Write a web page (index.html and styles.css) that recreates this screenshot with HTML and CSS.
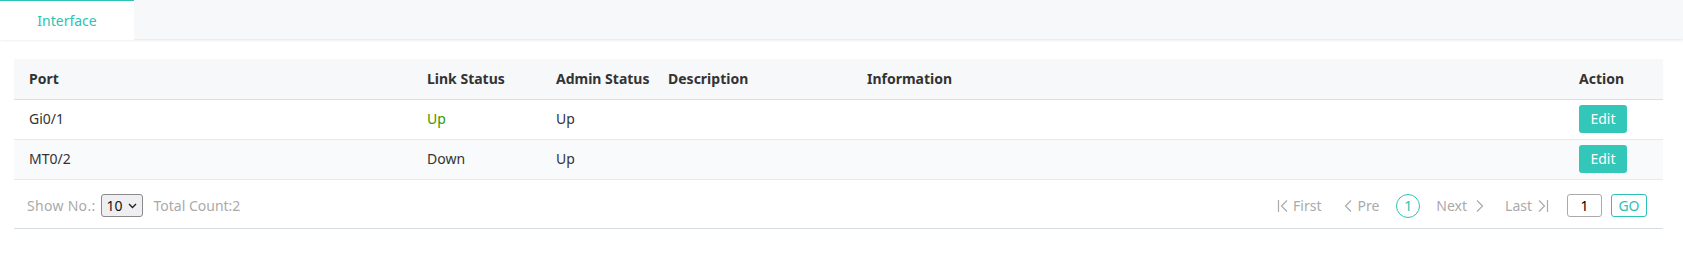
FILE: index.html
```
<!DOCTYPE html>
<html lang="en">
    <head>
        <meta charset="utf-8" />
        <title>Interface</title>
        <link rel="stylesheet" href="styles.css">
    </head>
    <body>
        <div class="tabbar">
            <div class="tab on">Interface</div>
        </div>
        <div class="wrap">
            <table class="grid">
                <colgroup>
                    <col class="c-port"><col class="c-link"><col class="c-admin"><col class="c-desc"><col class="c-info"><col class="c-act">
                </colgroup>
                <thead>
                    <tr>
                        <th>Port</th>
                        <th>Link Status</th>
                        <th>Admin Status</th>
                        <th>Description</th>
                        <th>Information</th>
                        <th>Action</th>
                    </tr>
                </thead>
                <tbody>
                    <tr>
                        <td>Gi0/1</td>
                        <td class="up">Up</td>
                        <td>Up</td>
                        <td></td>
                        <td></td>
                        <td><span class="btn-edit">Edit</span></td>
                    </tr>
                    <tr class="odd">
                        <td>MT0/2</td>
                        <td>Down</td>
                        <td>Up</td>
                        <td></td>
                        <td></td>
                        <td><span class="btn-edit">Edit</span></td>
                    </tr>
                </tbody>
            </table>
            <div class="pager">
                <div class="pager-l">
                    <span class="show">Show No.:</span>
                    <span class="sel">10<svg width="9" height="6" viewBox="0 0 9 6"><path d="M1 1l3.5 3.5L8 1" fill="none" stroke="#222" stroke-width="1.4"/></svg></span>
                    <span class="total">Total Count:2</span>
                </div>
                <div class="pager-r">
                    <span class="pg first"><svg width="12" height="14" viewBox="0 0 12 14"><path d="M1.5 1v12M10 1.5L4.5 7l5.5 5.5" fill="none" stroke="#aaa" stroke-width="1.2"/></svg>First</span>
                    <span class="pg pre"><svg width="9" height="14" viewBox="0 0 9 14"><path d="M7 1.5L1.5 7 7 12.5" fill="none" stroke="#aaa" stroke-width="1.2"/></svg>Pre</span>
                    <span class="pg-num">1</span>
                    <span class="pg next">Next<svg width="9" height="14" viewBox="0 0 9 14"><path d="M2 1.5L7.5 7 2 12.5" fill="none" stroke="#aaa" stroke-width="1.2"/></svg></span>
                    <span class="pg last">Last<svg width="12" height="14" viewBox="0 0 12 14"><path d="M2 1.5L7.5 7 2 12.5M10.5 1v12" fill="none" stroke="#aaa" stroke-width="1.2"/></svg></span>
                    <span class="pg-input">1</span>
                    <span class="pg-go">GO</span>
                </div>
            </div>
        </div>
    </body>
</html>
```

FILE: styles.css
```
* { margin: 0; padding: 0; box-sizing: border-box; }
body { font: 14px/1.4 "Noto Sans", "Noto Sans CJK SC", sans-serif; color: #333; background: #fff; }

.tabbar { height: 39px; background: #f7f8fa; box-shadow: 0 1px 3px rgba(0,0,0,.12); }
.tab { float: left; width: 134px; height: 40px; line-height: 39px; text-align: center; color: #2ec2b4; }
.tab.on { background: #fff; border-top: 1px solid #2ec2b4; }

.wrap { padding: 20px 20px 0 14px; }

.grid { width: 100%; border-collapse: collapse; table-layout: fixed; }
.grid .c-port { width: 398px; }
.grid .c-link { width: 129px; }
.grid .c-admin { width: 112px; }
.grid .c-desc { width: 199px; }
.grid .c-act { width: 99px; }
.grid th { height: 40px; padding: 0 15px; background: #f7f8fa; text-align: left; font-weight: 700; color: #333; border-bottom: 1px solid #dcdfe6; white-space: nowrap; }
.grid td { height: 40px; padding: 0 15px; border-bottom: 1px solid #e6e9ee; color: #333; white-space: nowrap; }
.grid tr.odd td { background: #f9fafb; }
.grid td.up { color: #2f9a00; }
.btn-edit { display: inline-block; width: 48px; height: 28px; line-height: 28px; text-align: center; color: #fff; background: #33c7b9; border-radius: 3px; }

.pager { display: flex; justify-content: space-between; align-items: center; height: 49px; padding: 4px 16px 0 13px; border-bottom: 1px solid #d8dce3; color: #aaa; }
.pager-l { display: flex; align-items: center; }
.show { letter-spacing: .3px; }
.sel { display: inline-flex; align-items: center; justify-content: center; gap: 5px; width: 42px; height: 23px; margin-left: 5px; color: #111; background: #efeff1; border: 1px solid #8a8a8a; border-radius: 3px; }
.total { margin-left: 11px; }

.pager-r { display: flex; align-items: center; }
.pg { display: inline-flex; align-items: center; gap: 4px; }
.pre { margin-left: 23px; }
.pg-num { display: inline-block; width: 24px; height: 24px; line-height: 22px; margin-left: 17px; text-align: center; border: 1px solid #2ec2b4; border-radius: 50%; color: #2ec2b4; }
.next { margin-left: 16px; gap: 8px; }
.last { margin-left: 21px; gap: 5px; }
.pg-input { display: inline-block; width: 35px; height: 23px; line-height: 21px; margin-left: 18px; text-align: center; color: #000; border: 1px solid #aaa; border-radius: 3px; }
.pg-go { display: inline-block; width: 36px; height: 23px; line-height: 21px; margin-left: 9px; text-align: center; color: #2ec2b4; border: 1px solid #2ec2b4; border-radius: 3px; }
```
